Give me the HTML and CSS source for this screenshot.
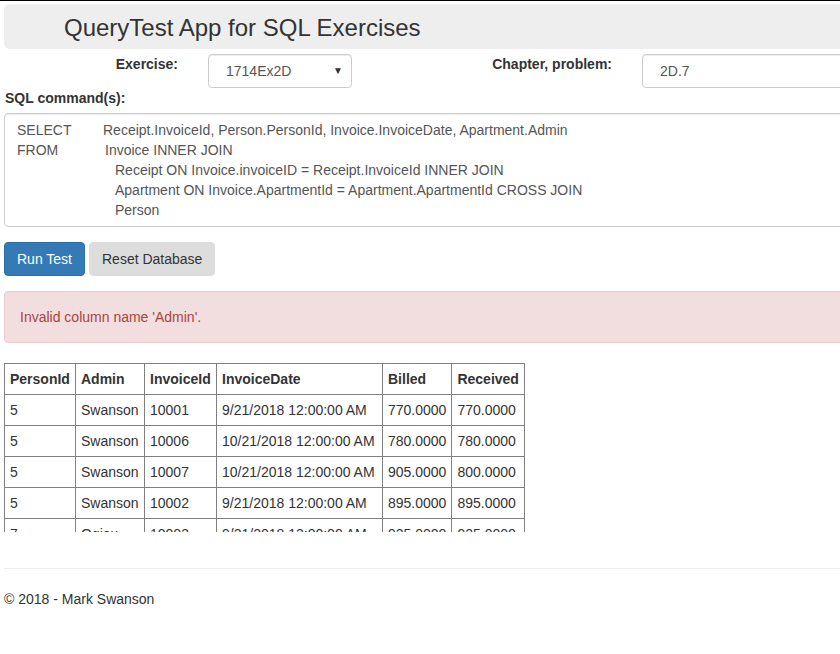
FILE: index.html
```html
<!DOCTYPE html>
<html>
<head>
<meta charset="utf-8">
<title>QueryTest App for SQL Exercises</title>
<link rel="stylesheet" href="styles.css">
</head>
<body>
<div class="page">
  <div class="jumbotron"><h1 class="title">QueryTest App for SQL Exercises</h1></div>

  <div class="form-row">
    <div class="cell label-cell c1"><label class="lbl">Exercise:</label></div>
    <div class="cell c2">
      <div class="select"><span>1714Ex2D</span><span class="caret">&#9660;</span></div>
    </div>
    <div class="cell label-cell c3"><label class="lbl">Chapter, problem:</label></div>
    <div class="cell c4">
      <div class="input">2D.7</div>
    </div>
  </div>

  <label class="lbl sql-label">SQL command(s):</label>
  <div class="textarea">
    <div class="line"><span class="kw">SELECT</span><span>Receipt.InvoiceId, Person.PersonId, Invoice.InvoiceDate, Apartment.Admin</span></div>
    <div class="line"><span class="kw kw2">FROM</span><span>Invoice INNER JOIN</span></div>
    <div class="line indent">Receipt ON Invoice.invoiceID = Receipt.InvoiceId INNER JOIN</div>
    <div class="line indent">Apartment ON Invoice.ApartmentId = Apartment.ApartmentId CROSS JOIN</div>
    <div class="line indent">Person</div>
  </div>

  <div class="buttons">
    <button class="btn btn-primary">Run Test</button>
    <button class="btn btn-default">Reset Database</button>
  </div>

  <div class="alert">Invalid column name 'Admin'.</div>

  <div class="results">
    <table class="grid">
      <thead>
        <tr><th class="w1">PersonId</th><th class="w2">Admin</th><th class="w3">InvoiceId</th><th class="w4">InvoiceDate</th><th class="w5">Billed</th><th class="w6">Received</th></tr>
      </thead>
      <tbody>
        <tr><td>5</td><td>Swanson</td><td>10001</td><td>9/21/2018 12:00:00 AM</td><td>770.0000</td><td>770.0000</td></tr>
        <tr><td>5</td><td>Swanson</td><td>10006</td><td>10/21/2018 12:00:00 AM</td><td>780.0000</td><td>780.0000</td></tr>
        <tr><td>5</td><td>Swanson</td><td>10007</td><td>10/21/2018 12:00:00 AM</td><td>905.0000</td><td>800.0000</td></tr>
        <tr><td>5</td><td>Swanson</td><td>10002</td><td>9/21/2018 12:00:00 AM</td><td>895.0000</td><td>895.0000</td></tr>
        <tr><td>7</td><td>Ogjou</td><td>10003</td><td>9/21/2018 12:00:00 AM</td><td>925.0000</td><td>925.0000</td></tr>
        <tr><td>7</td><td>Ogjou</td><td>10004</td><td>9/21/2018 12:00:00 AM</td><td>925.0000</td><td>925.0000</td></tr>
      </tbody>
    </table>
  </div>

  <hr class="rule">
  <footer class="footer">&copy; 2018 - Mark Swanson</footer>
</div>
</body>
</html>
```

FILE: styles.css
```css
html, body {
  margin: 0;
  padding: 0;
  overflow: hidden;
  background: #fff;
}
body {
  font-family: "Liberation Sans", Arial, sans-serif;
  font-size: 14px;
  line-height: 20px;
  color: #333;
  border-top: 1px solid #000;
}
.page {
  width: 900px;
  padding: 3px 0 0 4px;
}
.jumbotron {
  background: #eee;
  border-radius: 6px;
  height: 45px;
  box-sizing: border-box;
  display: flex;
  align-items: center;
  padding: 2px 0 0 60px;
}
.title {
  margin: 0;
  font-size: 24px;
  font-weight: normal;
  line-height: 28px;
  color: #333;
}
.form-row {
  display: flex;
  align-items: flex-start;
  margin-top: 5px;
}
.label-cell {
  text-align: right;
  padding-right: 15px;
  box-sizing: border-box;
}
.c1 { width: 189px; }
.c2 { width: 200px; padding-left: 15px; box-sizing: border-box; }
.c3 { width: 234px; }
.c4 { padding-left: 15px; flex: 1; }
.lbl {
  display: inline-block;
  font-weight: bold;
  line-height: 20px;
}
.select {
  width: 144px;
  height: 34px;
  box-sizing: border-box;
  border: 1px solid #ccc;
  border-radius: 4px;
  display: flex;
  align-items: center;
  justify-content: space-between;
  padding: 0 8px 0 17px;
  color: #555;
  box-shadow: inset 0 1px 1px rgba(0,0,0,.075);
}
.caret {
  font-size: 10px;
  color: #333;
  line-height: 10px;
}
.input {
  height: 34px;
  box-sizing: border-box;
  border: 1px solid #ccc;
  border-radius: 4px;
  padding: 6px 17px;
  color: #555;
  width: 260px;
  box-shadow: inset 0 1px 1px rgba(0,0,0,.075);
}
.sql-label {
  display: block;
  margin: 0 0 5px 1px;
}
.textarea {
  border: 1px solid #ccc;
  border-radius: 4px;
  padding: 6px 12px;
  color: #555;
  box-shadow: inset 0 1px 1px rgba(0,0,0,.075);
  height: 100px;
}
.line { white-space: nowrap; }
.kw { display: inline-block; width: 86px; }
.kw2 { width: 88px; }
.indent { padding-left: 98px; }
.buttons {
  margin-top: 15px;
  display: flex;
  gap: 4px;
}
.btn {
  font-family: inherit;
  font-size: 14px;
  line-height: 20px;
  height: 34px;
  padding: 6px 12px;
  border-radius: 4px;
  border: 1px solid transparent;
  margin: 0;
}
.btn-primary {
  background: #337ab7;
  border-color: #2e6da4;
  color: #fff;
}
.btn-default {
  background: #ddd;
  border-color: #ddd;
  color: #333;
}
.alert {
  margin-top: 15px;
  background: #f2dede;
  border: 1px solid #ebccd1;
  border-radius: 4px;
  color: #a94442;
  padding: 15px;
}
.results {
  margin-top: 20px;
  height: 169px;
  overflow: hidden;
}
.grid {
  border-collapse: collapse;
}
.grid th, .grid td {
  border: 1px solid #808080;
  padding: 5px 5px;
  text-align: left;
  white-space: nowrap;
}
.grid th { font-weight: bold; }
.w1 { width: 60px; }
.w2 { width: 58px; }
.w3 { width: 61px; }
.w4 { width: 155px; }
.w5 { width: 58px; }
.w6 { width: 62px; }
.rule {
  margin: 36px 0 0 0;
  border: 0;
  border-top: 1px solid #eee;
}
.footer {
  margin-top: 20px;
}
```
